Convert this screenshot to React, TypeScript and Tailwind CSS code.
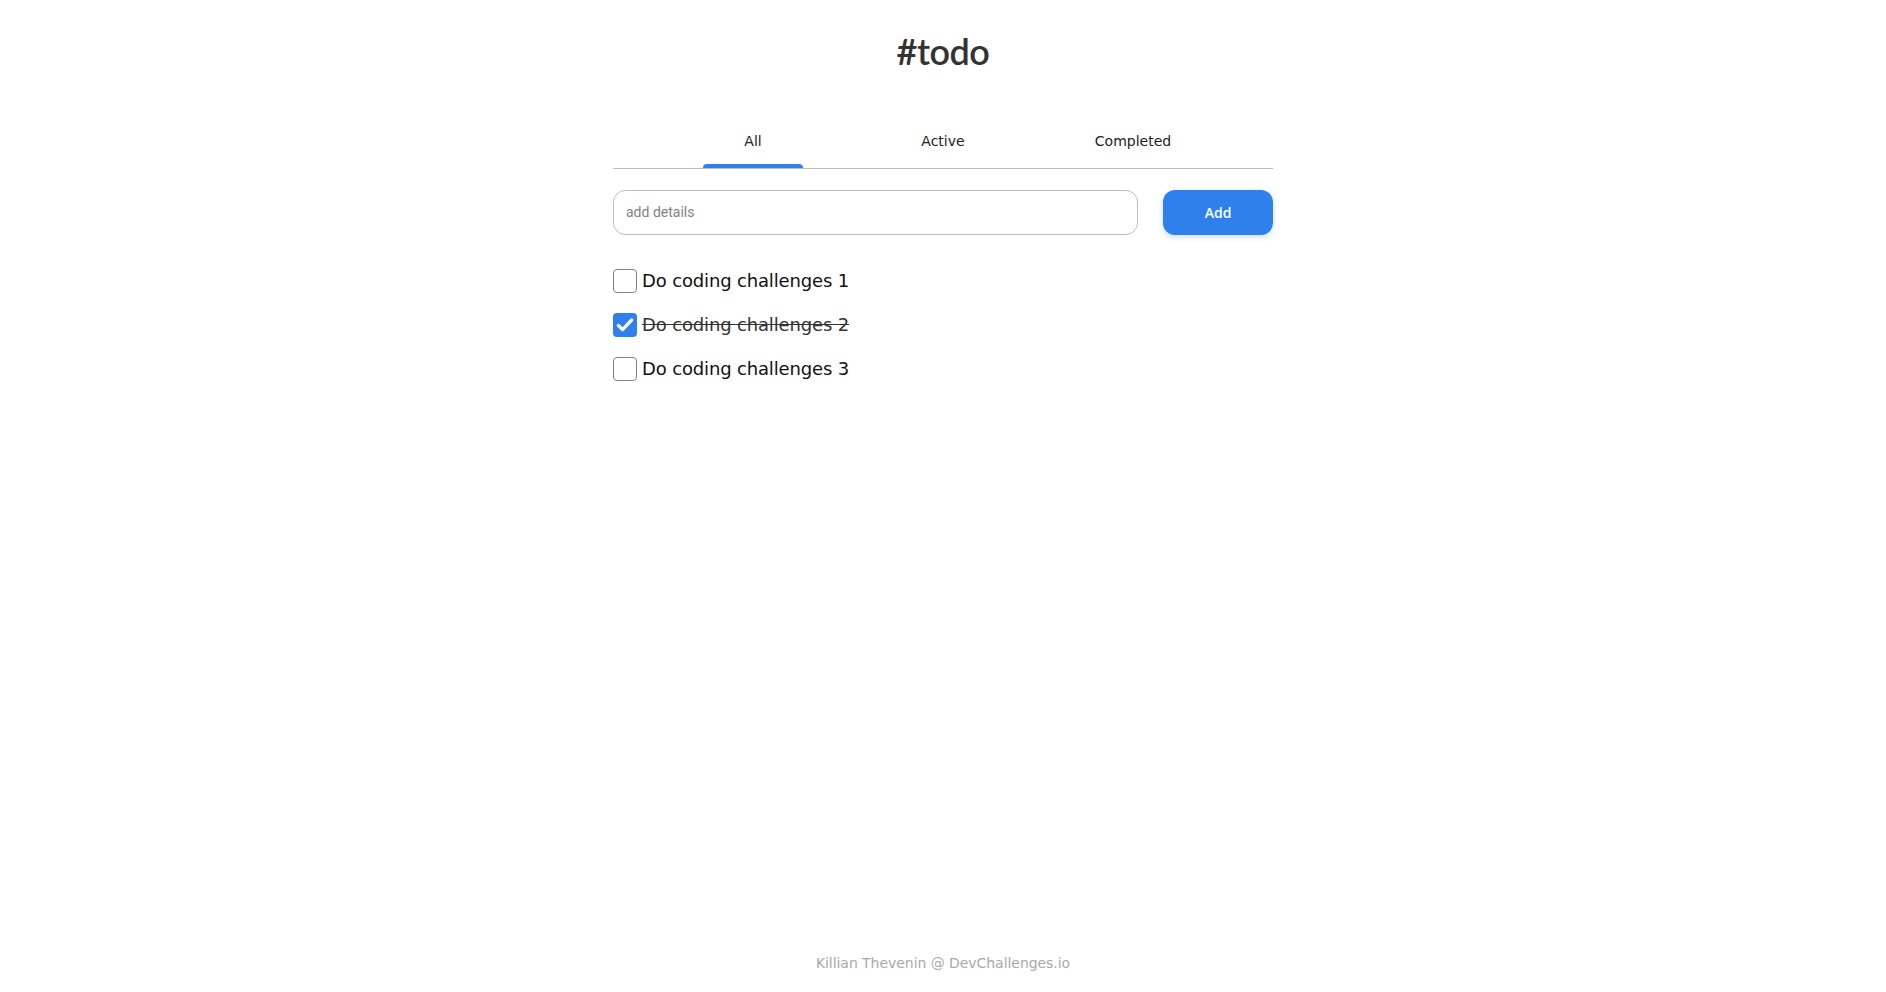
import React from "react";

const items = [
  { id: 1, text: "Do coding challenges 1", done: false },
  { id: 2, text: "Do coding challenges 2", done: true },
  { id: 3, text: "Do coding challenges 3", done: false },
];

function Checkbox({ checked }: { checked: boolean }) {
  if (checked) {
    return (
      <span className="flex h-6 w-6 shrink-0 items-center justify-center rounded-[4px] bg-[#2F80ED]">
        <svg viewBox="0 0 24 24" className="h-[20px] w-[20px]" fill="none">
          <path d="M4 12.5l5 5L20 6" stroke="#fff" strokeWidth="4" strokeLinecap="round" strokeLinejoin="round" />
        </svg>
      </span>
    );
  }
  return <span className="h-6 w-6 shrink-0 rounded-[4px] border border-[#828282] bg-white" />;
}

export default function App() {
  const tabs = ["All", "Active", "Completed"];
  return (
    <div className="flex min-h-screen flex-col items-center bg-white text-[#333333]">
      <h1 className="mt-[30px] font-['Lato',sans-serif] text-[36px] font-semibold leading-[42px] tracking-[-0.5px] text-[#333333]">
        #todo
      </h1>

      <div className="mt-[61px] flex w-[660px] justify-center border-b border-[#BDBDBD]">
        {tabs.map((t, i) => (
          <div key={t} className="flex w-[190px] flex-col items-center">
            <span className="font-['DejaVu_Sans',sans-serif] text-[14px] leading-[17px] text-[#222222]">
              {t}
            </span>
            <span
              className={
                i === 0
                  ? "mt-[14px] h-1 w-[100px] rounded-t-[4px] bg-[#2F80ED]"
                  : "mt-[14px] h-1 w-[100px] rounded-t-[4px] bg-transparent"
              }
            />
          </div>
        ))}
      </div>

      <div className="mt-[21px] flex w-[660px] items-center gap-[25px]">
        <div className="flex h-[45px] flex-1 items-center rounded-[12px] border border-[#BDBDBD] px-3">
          <span className="font-['Roboto',sans-serif] text-[14px] leading-[17px] text-[#828282]">add details</span>
        </div>
        <button className="h-[45px] w-[110px] rounded-[12px] bg-[#2F80ED] font-['Open_Sans',sans-serif] text-[14px] font-semibold text-white shadow-[0_2px_6px_rgba(127,177,243,0.4)]">
          Add
        </button>
      </div>

      <ul className="mt-[34px] flex w-[660px] flex-col gap-5">
        {items.map((it) => (
          <li key={it.id} className="flex h-6 items-center gap-[5px]">
            <Checkbox checked={it.done} />
            <span
              className={
                it.done
                  ? "font-['DejaVu_Sans',sans-serif] text-[18px] leading-[22px] tracking-[-0.15px] text-[#333333] line-through"
                  : "font-['DejaVu_Sans',sans-serif] text-[18px] leading-[22px] tracking-[-0.15px] text-[#111111]"
              }
            >
              {it.text}
            </span>
          </li>
        ))}
      </ul>

      <footer className="mt-auto pb-[20px] font-['DejaVu_Sans',sans-serif] text-[14px] leading-[17px] tracking-[-0.05px] text-[#A9A9A9]">
        Killian Thevenin @ DevChallenges.io
      </footer>
    </div>
  );
}
